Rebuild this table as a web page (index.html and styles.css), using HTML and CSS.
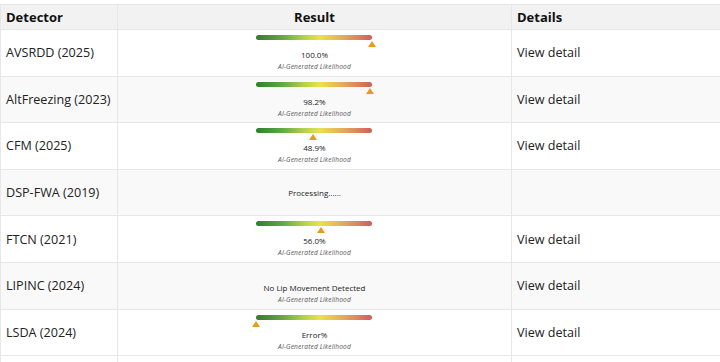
FILE: index.html
```html
<!DOCTYPE html>
<html>
<head>
<meta charset="utf-8">
<link rel="stylesheet" href="styles.css">
</head>
<body>
<table class="tbl">
  <colgroup><col class="c1"><col class="c2"><col class="c3"></colgroup>
  <thead>
    <tr><th class="h-left">Detector</th><th class="h-mid">Result</th><th class="h-left">Details</th></tr>
  </thead>
  <tbody>
    <tr>
      <td class="name">AVSRDD (2025)</td>
      <td class="res"><div class="meter"><div class="track"><div class="bar"></div><span class="tri" style="left:100%"></span></div><div class="pct">100.0%</div><div class="cap">AI-Generated Likelihood</div></div></td>
      <td class="det">View detail</td>
    </tr>
    <tr class="alt">
      <td class="name">AltFreezing (2023)</td>
      <td class="res"><div class="meter"><div class="track"><div class="bar"></div><span class="tri" style="left:98.2%"></span></div><div class="pct">98.2%</div><div class="cap">AI-Generated Likelihood</div></div></td>
      <td class="det">View detail</td>
    </tr>
    <tr>
      <td class="name">CFM (2025)</td>
      <td class="res"><div class="meter"><div class="track"><div class="bar"></div><span class="tri" style="left:48.9%"></span></div><div class="pct">48.9%</div><div class="cap">AI-Generated Likelihood</div></div></td>
      <td class="det">View detail</td>
    </tr>
    <tr class="alt">
      <td class="name">DSP-FWA (2019)</td>
      <td class="res"><div class="proc">Processing......</div></td>
      <td class="det"></td>
    </tr>
    <tr>
      <td class="name">FTCN (2021)</td>
      <td class="res"><div class="meter"><div class="track"><div class="bar"></div><span class="tri" style="left:56%"></span></div><div class="pct">56.0%</div><div class="cap">AI-Generated Likelihood</div></div></td>
      <td class="det">View detail</td>
    </tr>
    <tr class="alt">
      <td class="name">LIPINC (2024)</td>
      <td class="res"><div class="meter"><div class="track"></div><div class="pct">No Lip Movement Detected</div><div class="cap">AI-Generated Likelihood</div></div></td>
      <td class="det">View detail</td>
    </tr>
    <tr>
      <td class="name">LSDA (2024)</td>
      <td class="res"><div class="meter"><div class="track"><div class="bar"></div><span class="tri" style="left:0%"></span></div><div class="pct">Error%</div><div class="cap">AI-Generated Likelihood</div></div></td>
      <td class="det">View detail</td>
    </tr>
    <tr>
      <td class="name"></td>
      <td class="res"><div class="meter"></div></td>
      <td class="det"></td>
    </tr>
  </tbody>
</table>
</body>
</html>
```
FILE: styles.css
```css
html, body {
  margin: 0;
  padding: 0;
  background: #ffffff;
}
body {
  padding-top: 4px;
  font-family: "Open Sans", "DejaVu Sans", sans-serif;
  color: #1f1f1f;
}
.tbl {
  width: 720px;
  border-collapse: collapse;
  table-layout: fixed;
}
.c1 { width: 117px; }
.c2 { width: 394px; }
.c3 { width: 209px; }
th, td {
  border: 1px solid #e7e7e7;
  padding: 0;
}
thead tr {
  background: #f2f2f2;
}
th {
  height: 24px;
  font-size: 13px;
  font-weight: 700;
  color: #111;
}
.h-left { text-align: left; padding-left: 5px; }
.h-mid { text-align: center; }
tbody tr { height: 46.6px; }
tbody tr.alt { background: #f9f9f9; }
.name, .det {
  font-size: 12.6px;
  padding-left: 5px;
  vertical-align: middle;
  white-space: nowrap;
  color: #222;
}
.res { vertical-align: middle; }
.meter {
  height: 45.6px;
  display: flex;
  flex-direction: column;
  align-items: center;
}
.track {
  position: relative;
  width: 116px;
  height: 5px;
  margin-top: 5px;
  margin-right: 1px;
}
.bar {
  width: 100%;
  height: 100%;
  border-radius: 3px;
  background: linear-gradient(90deg, #2f7d32 0%, #5ea744 22%, #b6d24c 42%, #e9e24f 55%, #e6b25a 72%, #dc8a5c 86%, #cf5d5a 100%);
}
.tri {
  position: absolute;
  top: 6px;
  width: 0;
  height: 0;
  margin-left: -4px;
  border-left: 4px solid transparent;
  border-right: 4px solid transparent;
  border-bottom: 6px solid #ea9a1c;
}
.pct {
  margin-top: 10px;
  font-size: 8px;
  line-height: 10px;
  color: #222;
}
.cap {
  margin-top: 3px;
  font-size: 6.6px;
  line-height: 8px;
  font-style: italic;
  letter-spacing: 0.15px;
  color: #555;
}
.proc {
  text-align: center;
  font-size: 8px;
  color: #222;
}
```
